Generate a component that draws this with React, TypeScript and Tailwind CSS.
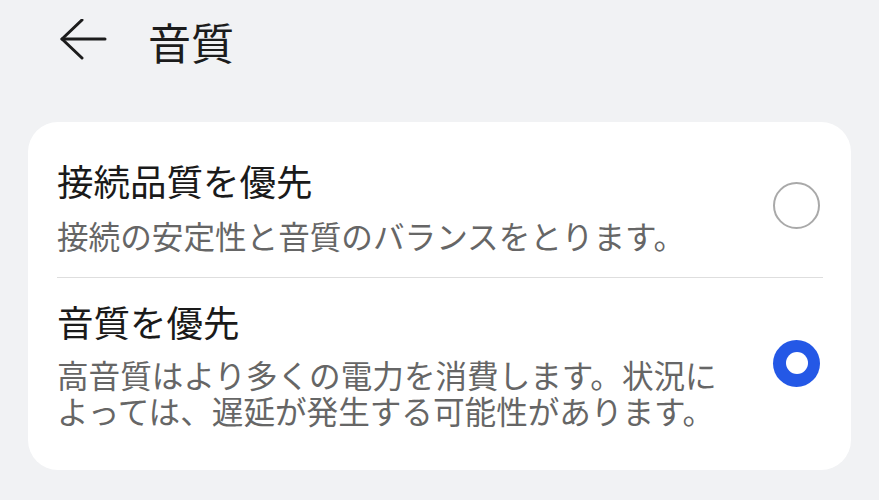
import React, { useState } from 'react';

// Audio quality settings screen: header with back arrow, then a card with two radio options.

const OPTIONS = [
  { id: 'connection', title: '接続品質を優先', desc: ['接続の安定性と音質のバランスをとります。'] },
  {
    id: 'quality',
    title: '音質を優先',
    desc: ['高音質はより多くの電力を消費します。状況に', 'よっては、遅延が発生する可能性があります。'],
  },
];

const Radio: React.FC<{ checked: boolean }> = ({ checked }) =>
  checked ? (
    <div className="w-[47px] h-[47px] rounded-full bg-[#2458e6] flex items-center justify-center shrink-0">
      <div className="w-[22px] h-[22px] rounded-full bg-white" />
    </div>
  ) : (
    <div className="w-[47px] h-[47px] rounded-full border-2 border-[#a9a9a9] bg-white shrink-0" />
  );

export default function App() {
  const [selected, setSelected] = useState('quality');

  return (
    <div
      className="w-[879px] h-[500px] bg-[#f1f2f4] overflow-hidden"
      style={{ fontFamily: '"Noto Sans CJK JP", "Noto Sans", sans-serif' }}
    >
      <div className="flex items-center h-[82px] pl-[59px]">
        <svg width="48" height="44" viewBox="0 0 48 44" fill="none" stroke="#1c1c1c" strokeWidth="3" strokeLinecap="round" strokeLinejoin="round">
          <path d="M46 20H3" />
          <path d="M23 1 3 20l20 19" />
        </svg>
        <h1 className="ml-[41px] text-[43px] leading-none text-[#1c1c1c]">音質</h1>
      </div>

      <div className="mx-[28px] mt-[40px] bg-white rounded-[30px] px-[29px] pb-[42px]">
        {OPTIONS.map((o, i) => (
          <div key={o.id}>
            {i > 0 && <div className="h-px bg-[#dedede] -mr-[1px]" />}
            <button
              onClick={() => setSelected(o.id)}
              className={`w-full flex items-center text-left ${i === 0 ? 'pt-[35px] pb-[24px]' : 'pt-[20px]'}`}
            >
              <div className="flex-1">
                <div className="text-[36.5px] leading-[48px] text-[#1a1a1a]">{o.title}</div>
                <div className={`${i === 0 ? 'mt-[12px]' : 'mt-[10px]'} text-[31.6px] leading-[36px] text-[#666666]`}>
                  {o.desc.map((l) => (
                    <div key={l}>{l}</div>
                  ))}
                </div>
              </div>
              <div className="mr-[2px]">
                <Radio checked={selected === o.id} />
              </div>
            </button>
          </div>
        ))}
      </div>
    </div>
  );
}
